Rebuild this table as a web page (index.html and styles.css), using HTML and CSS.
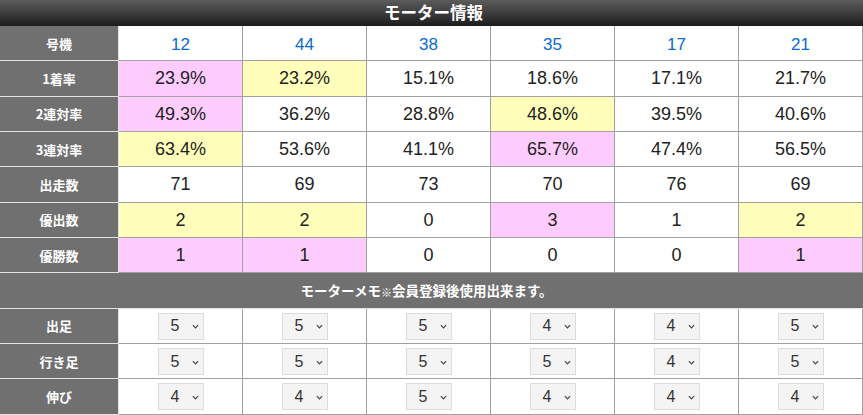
FILE: index.html
```html
<!DOCTYPE html>
<html lang="ja">
<head>
<meta charset="utf-8">
<title>モーター情報</title>
<link rel="stylesheet" href="styles.css">
</head>
<body>
<div class="title">モーター情報</div>
<div class="grid">
  <div class="lbl">号機</div>
  <div class="cell num">12</div><div class="cell num">44</div><div class="cell num">38</div><div class="cell num">35</div><div class="cell num">17</div><div class="cell num">21</div>

  <div class="lbl">1着率</div>
  <div class="cell pink">23.9%</div><div class="cell yellow">23.2%</div><div class="cell">15.1%</div><div class="cell">18.6%</div><div class="cell">17.1%</div><div class="cell">21.7%</div>

  <div class="lbl">2連対率</div>
  <div class="cell pink">49.3%</div><div class="cell">36.2%</div><div class="cell">28.8%</div><div class="cell yellow">48.6%</div><div class="cell">39.5%</div><div class="cell">40.6%</div>

  <div class="lbl">3連対率</div>
  <div class="cell yellow">63.4%</div><div class="cell">53.6%</div><div class="cell">41.1%</div><div class="cell pink">65.7%</div><div class="cell">47.4%</div><div class="cell">56.5%</div>

  <div class="lbl">出走数</div>
  <div class="cell">71</div><div class="cell">69</div><div class="cell">73</div><div class="cell">70</div><div class="cell">76</div><div class="cell">69</div>

  <div class="lbl">優出数</div>
  <div class="cell yellow">2</div><div class="cell yellow">2</div><div class="cell">0</div><div class="cell pink">3</div><div class="cell">1</div><div class="cell yellow">2</div>

  <div class="lbl">優勝数</div>
  <div class="cell pink">1</div><div class="cell pink">1</div><div class="cell">0</div><div class="cell">0</div><div class="cell">0</div><div class="cell pink">1</div>

  <div class="memo">モーターメモ<span class="kome">※</span>会員登録後使用出来ます。</div>

  <div class="lbl">出足</div>
  <div class="cell"><div class="sel">5<svg class="chev" viewBox="0 0 8 5"><path d="M1 1l3 3 3-3" /></svg></div></div>
  <div class="cell"><div class="sel">5<svg class="chev" viewBox="0 0 8 5"><path d="M1 1l3 3 3-3" /></svg></div></div>
  <div class="cell"><div class="sel">5<svg class="chev" viewBox="0 0 8 5"><path d="M1 1l3 3 3-3" /></svg></div></div>
  <div class="cell"><div class="sel">4<svg class="chev" viewBox="0 0 8 5"><path d="M1 1l3 3 3-3" /></svg></div></div>
  <div class="cell"><div class="sel">4<svg class="chev" viewBox="0 0 8 5"><path d="M1 1l3 3 3-3" /></svg></div></div>
  <div class="cell"><div class="sel">5<svg class="chev" viewBox="0 0 8 5"><path d="M1 1l3 3 3-3" /></svg></div></div>

  <div class="lbl">行き足</div>
  <div class="cell"><div class="sel">5<svg class="chev" viewBox="0 0 8 5"><path d="M1 1l3 3 3-3" /></svg></div></div>
  <div class="cell"><div class="sel">5<svg class="chev" viewBox="0 0 8 5"><path d="M1 1l3 3 3-3" /></svg></div></div>
  <div class="cell"><div class="sel">5<svg class="chev" viewBox="0 0 8 5"><path d="M1 1l3 3 3-3" /></svg></div></div>
  <div class="cell"><div class="sel">5<svg class="chev" viewBox="0 0 8 5"><path d="M1 1l3 3 3-3" /></svg></div></div>
  <div class="cell"><div class="sel">4<svg class="chev" viewBox="0 0 8 5"><path d="M1 1l3 3 3-3" /></svg></div></div>
  <div class="cell"><div class="sel">5<svg class="chev" viewBox="0 0 8 5"><path d="M1 1l3 3 3-3" /></svg></div></div>

  <div class="lbl">伸び</div>
  <div class="cell"><div class="sel">4<svg class="chev" viewBox="0 0 8 5"><path d="M1 1l3 3 3-3" /></svg></div></div>
  <div class="cell"><div class="sel">4<svg class="chev" viewBox="0 0 8 5"><path d="M1 1l3 3 3-3" /></svg></div></div>
  <div class="cell"><div class="sel">5<svg class="chev" viewBox="0 0 8 5"><path d="M1 1l3 3 3-3" /></svg></div></div>
  <div class="cell"><div class="sel">4<svg class="chev" viewBox="0 0 8 5"><path d="M1 1l3 3 3-3" /></svg></div></div>
  <div class="cell"><div class="sel">4<svg class="chev" viewBox="0 0 8 5"><path d="M1 1l3 3 3-3" /></svg></div></div>
  <div class="cell"><div class="sel">4<svg class="chev" viewBox="0 0 8 5"><path d="M1 1l3 3 3-3" /></svg></div></div>
</div>
</body>
</html>
```

FILE: styles.css
```css
html, body {
  margin: 0;
  padding: 0;
  background: #fff;
}
body {
  font-family: "Liberation Sans", "Noto Sans CJK JP", sans-serif;
  color: #222;
  width: 863px;
}
.title {
  height: 26px;
  line-height: 25px;
  text-align: center;
  color: #fff;
  font-weight: bold;
  font-size: 16.5px;
  font-family: "Noto Sans CJK JP", sans-serif;
  background: linear-gradient(#5c5c5c, #1c1c1c);
  padding-left: 4px;
}
.grid {
  display: grid;
  grid-template-columns: 119px repeat(6, 124px);
  grid-auto-rows: 35.33px;
}
.lbl {
  box-sizing: border-box;
  background: #707070;
  color: #fff;
  font-family: "Noto Sans CJK JP", sans-serif;
  font-weight: bold;
  font-size: 13px;
  display: flex;
  align-items: center;
  justify-content: center;
  border-right: 1px solid #e2e2e2;
  border-bottom: 1px solid #e2e2e2;
}
.cell {
  box-sizing: border-box;
  display: flex;
  align-items: center;
  justify-content: center;
  font-size: 18px;
  border-right: 1px solid #a0a0a0;
  border-bottom: 1px solid #a0a0a0;
  background: #fff;
  padding-top: 1px;
}
.num {
  color: #0a6ad0;
  font-size: 17px;
  padding-top: 3px;
}
.pink { background: #ffccff; }
.yellow { background: #ffffbb; }
.memo {
  grid-column: 1 / -1;
  box-sizing: border-box;
  background: #707070;
  color: #fff;
  font-family: "Noto Sans CJK JP", sans-serif;
  font-weight: bold;
  font-size: 13.5px;
  display: flex;
  align-items: center;
  justify-content: center;
  border-bottom: 1px solid #e2e2e2;
  padding-right: 10px;
}
.kome {
  font-size: 11px;
  margin-top: 3px;
}
.sel {
  box-sizing: border-box;
  width: 46px;
  height: 27px;
  background: #f4f4f4;
  border: 1px solid #dcdcdc;
  font-size: 16px;
  color: #333;
  display: flex;
  align-items: center;
  padding-left: 12px;
}
.chev {
  width: 7px;
  height: 5px;
  margin-left: 13px;
  margin-top: 1px;
  fill: none;
  stroke: #444;
  stroke-width: 1.4;
}
```
